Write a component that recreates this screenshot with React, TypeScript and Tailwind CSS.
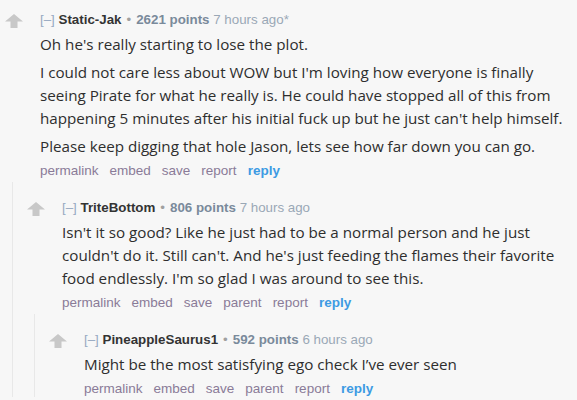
import React from "react";

const Arrow = () => (
  <svg width="18" height="14" viewBox="0 0 18 14" aria-hidden="true">
    <path d="M9 0 L18 7.5 H12.5 V14 H5.5 V7.5 H0 Z" fill="#c8c8c8" />
  </svg>
);

type CommentProps = {
  author: string;
  points: string;
  time: string;
  paragraphs: string[];
  actions: string[];
  top: string;
  children?: React.ReactNode;
};

function Comment({ author, points, time, paragraphs, actions, top, children }: CommentProps) {
  return (
    <div className={top}>
      <div className="flex">
        <div className="w-[35px] shrink-0 pt-[2px]">
          <Arrow />
        </div>
        <div className="min-w-0 flex-1">
          <div
            className="whitespace-nowrap text-[13.33px] leading-[16px]"
            style={{ fontFamily: '"Liberation Sans", Arial, sans-serif' }}
          >
            <span className="text-[#96a9c1]">[–]</span>{" "}
            <span className="font-bold text-[#333333]">{author}</span>
            <span className="px-[5px] text-[#a0a0a0]">•</span>
            <span className="font-bold text-[#7a8a9b]">{points}</span>{" "}
            <span className="text-[#9aa8b6]">{time}</span>
          </div>
          <div
            className="mt-[5px] text-[15.2px] leading-[23px] text-[#2e2e2e]"
            style={{ fontFamily: '"Open Sans", "Noto Sans", sans-serif' }}
          >
            {paragraphs.map((p, i) => (
              <p key={i} className={i < paragraphs.length - 1 ? "mb-[5px]" : ""}>
                {p}
              </p>
            ))}
          </div>
          <div
            className="mt-[5px] flex gap-[11px] whitespace-nowrap text-[13.5px] leading-[16px]"
            style={{ fontFamily: '"Liberation Sans", Arial, sans-serif' }}
          >
            {actions.map((a) => (
              <span key={a} className="text-[#8a7b98]">
                {a}
              </span>
            ))}
            <span className="font-bold text-[#3d9be3]">reply</span>
          </div>
        </div>
      </div>
      {children && (
        <div className="ml-[7px] mt-[3px] border-l border-[#e8e8e8] pl-[14px]">{children}</div>
      )}
    </div>
  );
}

export default function App() {
  return (
    <div className="h-[400px] w-[577px] overflow-hidden bg-[#f7f7f7] pl-[5px] pr-[2px]">
      <Comment
        top="pt-[12px]"
        author="Static-Jak"
        points="2621 points"
        time="7 hours ago*"
        paragraphs={[
          "Oh he's really starting to lose the plot.",
          "I could not care less about WOW but I'm loving how everyone is finally seeing Pirate for what he really is. He could have stopped all of this from happening 5 minutes after his initial fuck up but he just can't help himself.",
          "Please keep digging that hole Jason, lets see how far down you can go.",
        ]}
        actions={["permalink", "embed", "save", "report"]}
      >
        <Comment
          top="pt-[18px]"
          author="TriteBottom"
          points="806 points"
          time="7 hours ago"
          paragraphs={[
            "Isn't it so good? Like he just had to be a normal person and he just couldn't do it. Still can't. And he's just feeding the flames their favorite food endlessly. I'm so glad I was around to see this.",
          ]}
          actions={["permalink", "embed", "save", "parent", "report"]}
        >
          <Comment
            top="pt-[18px]"
            author="PineappleSaurus1"
            points="592 points"
            time="6 hours ago"
            paragraphs={["Might be the most satisfying ego check I’ve ever seen"]}
            actions={["permalink", "embed", "save", "parent", "report"]}
          />
        </Comment>
      </Comment>
    </div>
  );
}
